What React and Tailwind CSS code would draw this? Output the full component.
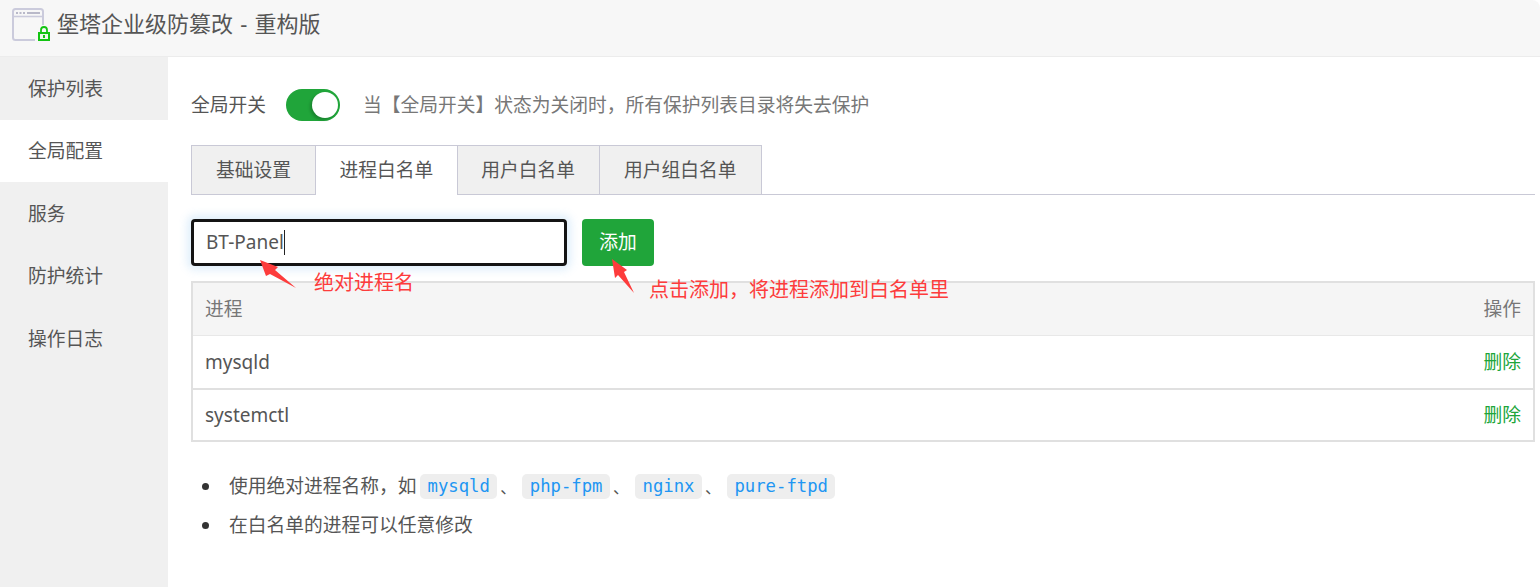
import React from 'react';

const sans = 'font-["Noto_Sans","Noto_Sans_CJK_SC",sans-serif]';

const menu = ['保护列表', '全局配置', '服务', '防护统计', '操作日志'];
const tabs = ['基础设置', '进程白名单', '用户白名单', '用户组白名单'];
const rows = ['mysqld', 'systemctl'];
const codes = ['mysqld', 'php-fpm', 'nginx', 'pure-ftpd'];

const Logo = () => (
    <svg width="46" height="42" viewBox="0 0 46 42" className="mt-[5px] ml-[8px] shrink-0 self-start">
        <rect x="5" y="4" width="30" height="31" rx="2.5" fill="none" stroke="#cbcbdc" strokeWidth="2" />
        <path d="M5 11.5h30" stroke="#cbcbdc" strokeWidth="1.6" />
        <path d="M8 8h2M11.5 8h2M15 8h2M19 8h13" stroke="#b9b9c9" strokeWidth="2" />
        <rect x="27" y="20" width="17" height="18" fill="#f7f7f7" />
        <rect x="31" y="28" width="10" height="7" fill="#eaf9ea" stroke="#12c412" strokeWidth="2" />
        <path d="M33 28v-3a3 3 0 0 1 6 0v3" fill="none" stroke="#12c412" strokeWidth="1.8" />
        <rect x="35" y="30" width="2" height="3" fill="#12c412" />
    </svg>
);

const LeftArrow = () => (
    <svg width="37" height="29" viewBox="0 0 37 29" className="absolute left-[69px] top-[41px]">
        <path d="M0 0 L18 7 L15 10 L36 28 L10 14 L6 16 Z" fill="#fd3c3c" />
    </svg>
);

const RightArrow = () => (
    <svg width="23" height="35" viewBox="0 0 23 35" className="absolute left-[421px] top-[40px]">
        <path d="M0 0 L15 11 L12 13 L22 34 L6 16 L3 19 Z" fill="#fd3c3c" />
    </svg>
);

const App = () => {
    return (
        <div className={`h-[587px] w-[1540px] overflow-hidden bg-white text-[18.75px] text-[#555] ${sans}`}>
            <header className="flex h-[57px] items-center rounded-tr-[8px] border-b border-[#ececec] bg-[#f7f7f7]">
                <Logo />
                <h1 className="mb-[9px] ml-[3px] text-[22px] text-[#555] [word-spacing:1.5px]">堡塔企业级防篡改 - 重构版</h1>
            </header>

            <div className="flex h-[530px]">
                <nav className="w-[168px] shrink-0 bg-[#f0f0f0]">
                    {menu.map((item, index) => (
                        <div
                            key={item}
                            className={`flex h-[62.5px] items-center pl-[28px] pt-[1px] ${index === 1 ? 'bg-white' : ''}`}
                        >
                            {item}
                        </div>
                    ))}
                </nav>

                <main className="min-w-0 flex-1 pl-[23px] pr-[5px]">
                    <div className="flex items-center pt-[32px]">
                        <span>全局开关</span>
                        <span className="ml-[20px] flex h-[32px] w-[54px] items-center justify-end rounded-full bg-[#20a53a] pr-[2px]">
                            <span className="h-[26px] w-[26px] rounded-full bg-white shadow-[-2px_2px_3px_rgba(0,0,0,0.2)]" />
                        </span>
                        <span className="ml-[23px] text-[#777]">当【全局开关】状态为关闭时，所有保护列表目录将失去保护</span>
                    </div>

                    <div className="mt-[24px] flex h-[50px] border-b border-[#c9c9d6]">
                        {tabs.map((tab, index) => (
                            <div
                                key={tab}
                                className={`flex items-center justify-center border-t border-r border-[#c9c9d6] px-[23.5px] first:border-l first:px-[24px] last:px-[24.5px] ${
                                    index === 1 ? 'mb-[-1px] h-[50px] bg-white' : 'h-[49px] bg-[#f0f0f0]'
                                }`}
                            >
                                {tab}
                            </div>
                        ))}
                    </div>

                    <div className="relative mt-[24px] flex">
                        <div className="flex h-[47px] w-[376px] items-center rounded-[4px] border-[3px] border-[#141414] pl-[12px] text-[19px] shadow-[0_0_8px_4px_rgba(102,175,233,0.2)]">
                            BT-Panel
                            <span className="h-[25px] w-px bg-[#222]" />
                        </div>
                        <button className="ml-[15px] h-[47px] w-[72px] rounded-[4px] bg-[#20a53a] text-white">添加</button>
                        <LeftArrow />
                        <span className="absolute left-[123px] top-[48px] text-[20px] leading-[32px] text-[#fd3c3c]">绝对进程名</span>
                        <RightArrow />
                        <span className="absolute left-[458px] top-[55px] text-[20px] leading-[32px] text-[#fd3c3c]">点击添加，将进程添加到白名单里</span>
                    </div>

                    <div className="mt-[15px] border-2 border-[#e0e0e0]">
                        <div className="flex h-[52px] items-center justify-between bg-[#f5f5f5] px-[12px] text-[#777]">
                            <span>进程</span>
                            <span>操作</span>
                        </div>
                        {rows.map((row, index) => (
                            <div
                                key={row}
                                className={`flex items-center justify-between px-[12px] ${
                                    index === 0 ? 'h-[55px] border-t border-b-2 border-t-[#e8e8e8] border-b-[#e0e0e0]' : 'h-[50px]'
                                }`}
                            >
                                <span className="text-[19px]">{row}</span>
                                <span className="text-[#20a53a]">删除</span>
                            </div>
                        ))}
                    </div>

                    <ul className="mt-[25px]">
                        <li className="flex h-[39px] items-center">
                            <span className="ml-[11px] mr-[20px] h-[7px] w-[7px] rounded-full bg-[#333]" />
                            使用绝对进程名称，如
                            <span className="ml-[3.5px] flex items-center">
                                {codes.map((code, index) => (
                                    <React.Fragment key={code}>
                                        <code className='flex h-[25px] items-center rounded-[5px] bg-[#eeeeee] px-[7.5px] font-["DejaVu_Sans_Mono",monospace] text-[17.25px] text-[#2196f3]'>{code}</code>
                                        {index < codes.length - 1 && <span className="w-[25px] pl-[3px] text-[16px]">、</span>}
                                    </React.Fragment>
                                ))}
                            </span>
                        </li>
                        <li className="flex h-[39px] items-center">
                            <span className="ml-[11px] mr-[20px] h-[7px] w-[7px] rounded-full bg-[#333]" />
                            在白名单的进程可以任意修改
                        </li>
                    </ul>
                </main>
            </div>
        </div>
    );
};

export default App;
